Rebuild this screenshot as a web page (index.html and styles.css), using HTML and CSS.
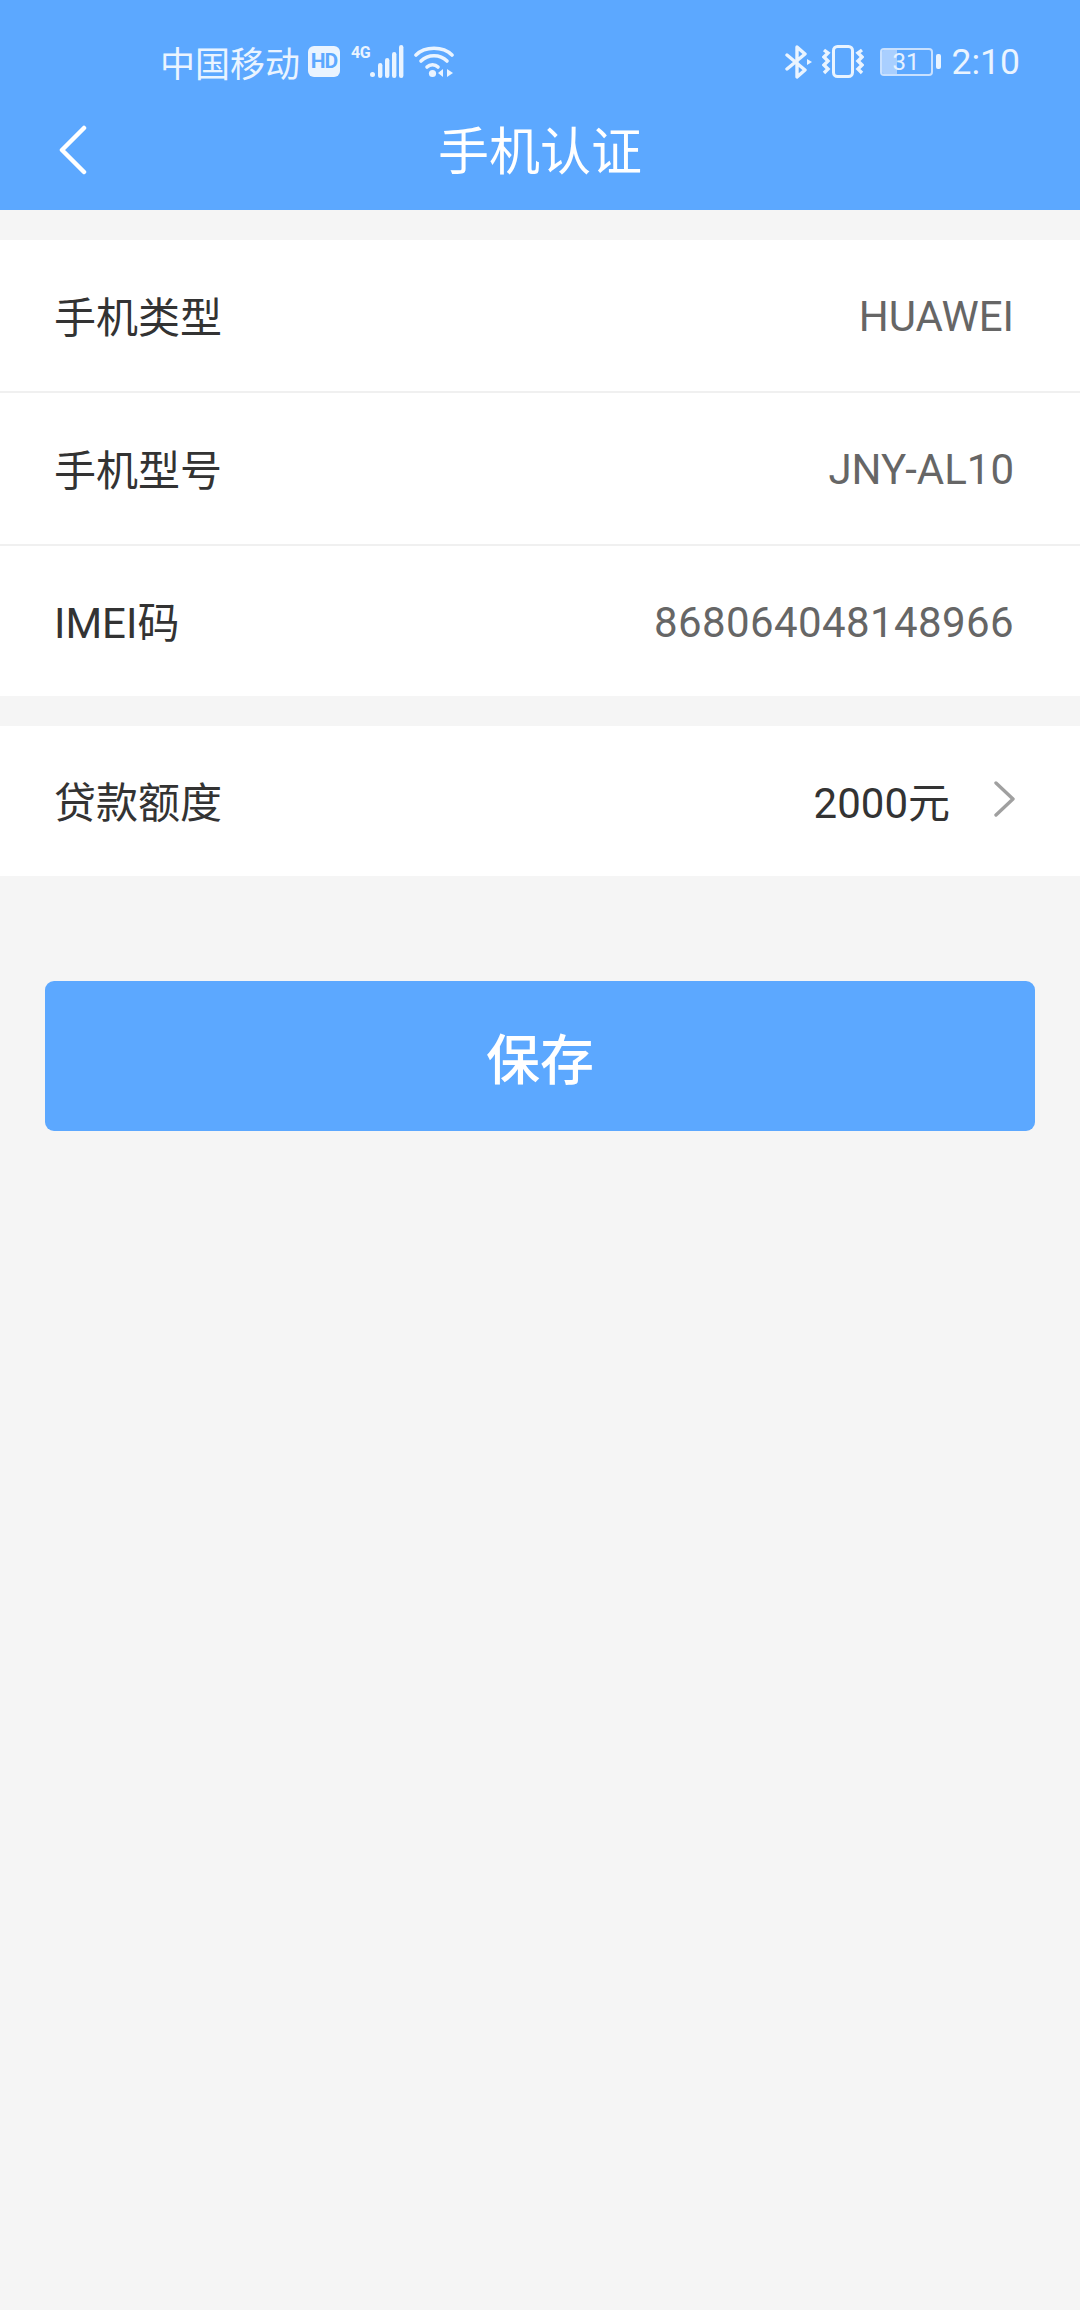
FILE: index.html
```html
<!DOCTYPE html>
<html lang="zh-CN">
<head>
    <meta charset="UTF-8">
    <meta name="viewport" content="width=device-width, initial-scale=1.0">
    <title>手机认证</title>
    <link rel="stylesheet" href="styles.css">
</head>
<body>
    <header class="header">
        <div class="status-bar">
            <div class="status-left">
                <span class="carrier">中国移动</span>
                <span class="hd-badge">HD</span>
                <span class="net-label">4G</span>
                <svg class="signal-icon" width="34" height="33" viewBox="0 0 34 33">
                    <g fill="#eaf4ff">
                        <circle cx="2.5" cy="29.5" r="2.5"/>
                        <rect x="8" y="18" width="4.4" height="15" rx="2.2"/>
                        <rect x="15" y="13" width="4.4" height="20" rx="2.2"/>
                        <rect x="22" y="7" width="4.4" height="26" rx="2.2"/>
                        <rect x="29" y="0" width="4.4" height="33" rx="2.2"/>
                    </g>
                </svg>
                <svg class="wifi-icon" width="40" height="32" viewBox="0 0 40 32">
                    <g fill="none" stroke="#eaf4ff" stroke-width="3.6" stroke-linecap="round">
                        <path d="M2 9C11 0 29 0 38 9"/>
                        <path d="M7 15C14 8 26 8 33 15"/>
                        <path d="M13 21C16 18 21 18 24 21"/>
                    </g>
                    <circle cx="18.5" cy="27.5" r="3.6" fill="#eaf4ff"/>
                    <path d="M29 23v8l-5-4zM33 23v8l6-4z" fill="#eaf4ff"/>
                </svg>
            </div>
            <div class="status-right">
                <svg class="bt-icon" width="27" height="34" viewBox="0 0 27 34">
                    <path d="M2 10L20 25L12 32V2L20 9L2 24" fill="none" stroke="#eaf4ff" stroke-width="3.4" stroke-linejoin="round" stroke-linecap="round"/>
                    <path d="M22 14l5 3-5 3z" fill="#eaf4ff"/>
                </svg>
                <svg class="vibrate-icon" width="42" height="33" viewBox="0 0 42 33">
                    <rect x="11.5" y="1.5" width="19" height="30" rx="4" fill="none" stroke="#eaf4ff" stroke-width="3"/>
                    <path d="M2 5l4 3-4 4 4 4-4 4 4 4-4 4M40 5l-4 3 4 4-4 4 4 4-4 4 4 4" fill="none" stroke="#eaf4ff" stroke-width="3.4"/>
                </svg>
                <div class="battery">
                    <div class="battery-body">
                        <div class="battery-fill"></div>
                        <span class="battery-num">31</span>
                    </div>
                    <div class="battery-cap"></div>
                </div>
                <span class="clock">2:10</span>
            </div>
        </div>
        <div class="title-bar">
            <svg class="back-icon" width="30" height="50" viewBox="0 0 30 50">
                <path d="M26 3L4 25L26 47" fill="none" stroke="#fff" stroke-width="4.5" stroke-linecap="round" stroke-linejoin="round"/>
            </svg>
            <h1 class="title">手机认证</h1>
        </div>
    </header>

    <section class="group">
        <div class="row">
            <span class="label">手机类型</span>
            <span class="value">HUAWEI</span>
        </div>
        <div class="row">
            <span class="label">手机型号</span>
            <span class="value">JNY-AL10</span>
        </div>
        <div class="row">
            <span class="label">IMEI码</span>
            <span class="value imei">868064048148966</span>
        </div>
    </section>

    <section class="group">
        <div class="row">
            <span class="label">贷款额度</span>
            <div class="picker">
                <span class="picker-value">2000元</span>
                <svg class="arrow-icon" width="22" height="36" viewBox="0 0 22 36">
                    <path d="M2 2L19 18L2 34" fill="none" stroke="#a0a0a0" stroke-width="3.4" stroke-linecap="round" stroke-linejoin="round"/>
                </svg>
            </div>
        </div>
    </section>

    <button class="save-btn">保存</button>
</body>
</html>
```

FILE: styles.css
```css
body {
    font-family: Roboto, "Noto Sans CJK SC", sans-serif;
    margin: 0;
    padding: 0;
    height: 2310px;
    background-color: #f5f5f5;
}
.header {
    height: 210px;
    background: #5ca8ff;
    color: #fff;
}
.status-bar {
    box-sizing: border-box;
    height: 84px;
    display: flex;
    justify-content: space-between;
    align-items: center;
    padding: 39px 60px 0 160px;
    color: #eaf4ff;
}
.status-left,
.status-right {
    display: flex;
    align-items: center;
}
.carrier {
    font-size: 35px;
}
.hd-badge {
    width: 32px;
    height: 31px;
    margin-left: 8px;
    background: #eaf4ff;
    color: #5ca8ff;
    border-radius: 6px;
    font-size: 21px;
    font-weight: 700;
    letter-spacing: -1px;
    line-height: 31px;
    text-align: center;
}
.net-label {
    width: 19px;
    font-size: 16px;
    font-weight: 700;
    letter-spacing: -0.5px;
    margin: -18px 0 0 11px;
}
.wifi-icon {
    margin-left: 10px;
}
.bt-icon {
    margin-right: 10px;
}
.vibrate-icon {
    margin-right: 16px;
}
.battery {
    display: flex;
    align-items: center;
    margin-right: 11px;
}
.battery-body {
    position: relative;
    box-sizing: border-box;
    width: 53px;
    height: 28px;
    border: 2px solid #c9e1ff;
    border-radius: 4px;
    overflow: hidden;
}
.battery-fill {
    width: 31%;
    height: 100%;
    background: #a9cfff;
}
.battery-num {
    position: absolute;
    left: 0;
    top: 0;
    right: 0;
    font-size: 24px;
    line-height: 24px;
    text-align: center;
    color: #e6f1ff;
}
.battery-cap {
    width: 5px;
    height: 15px;
    margin-left: 3px;
    background: #eaf4ff;
    border-radius: 2px;
}
.clock {
    font-size: 35.5px;
}
.title-bar {
    height: 126px;
    display: grid;
    grid-template-columns: 1fr auto 1fr;
    align-items: center;
}
.back-icon {
    margin: 6px 0 0 58px;
}
.title {
    margin: 2px 0 0 0;
    font-size: 51px;
    font-weight: 400;
    color: #fff;
}
.group {
    margin-top: 30px;
    background: #fff;
}
.row {
    box-sizing: border-box;
    height: 153px;
    display: flex;
    justify-content: space-between;
    align-items: center;
    padding: 0 66px 2px 54px;
    border-bottom: 2px solid #f0f0f0;
    font-size: 42px;
}
.row:last-child {
    height: 150px;
    padding-bottom: 4px;
    border-bottom: none;
}
.label {
    color: #333;
}
.value {
    color: #666;
    font-size: 42px;
    margin-top: 3px;
}
.imei {
    margin-top: 7px;
    letter-spacing: 0.4px;
}
.picker {
    display: flex;
    align-items: center;
    margin-right: -2px;
}
.picker-value {
    color: #333;
    font-size: 42px;
}
.arrow-icon {
    margin-left: 44px;
}
.save-btn {
    display: block;
    width: 990px;
    height: 150px;
    margin: 105px 0 0 45px;
    padding: 0;
    border: none;
    border-radius: 9px;
    background: #5ca8ff;
    color: #fff;
    font-family: inherit;
    font-size: 54px;
    font-weight: 500;
}
```
